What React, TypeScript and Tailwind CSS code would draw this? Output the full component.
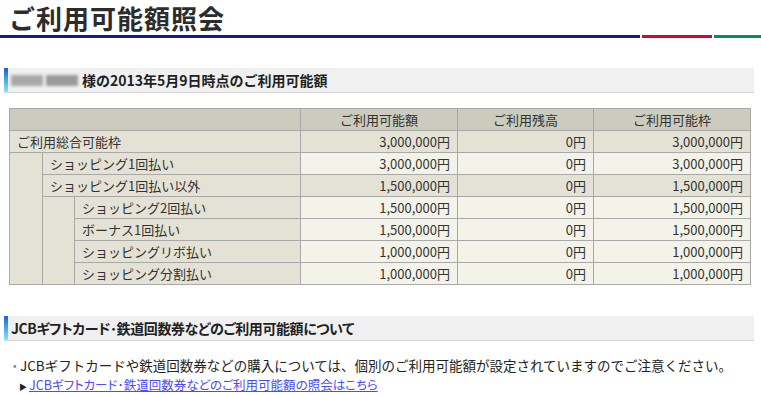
const rows = [
  { label: "ご利用総合可能枠", level: 0, a: "3,000,000円", b: "0円", c: "3,000,000円", dark: true },
  { label: "ショッピング1回払い", level: 1, a: "3,000,000円", b: "0円", c: "3,000,000円", dark: false },
  { label: "ショッピング1回払い以外", level: 1, a: "1,500,000円", b: "0円", c: "1,500,000円", dark: true },
  { label: "ショッピング2回払い", level: 2, a: "1,500,000円", b: "0円", c: "1,500,000円", dark: false },
  { label: "ボーナス1回払い", level: 2, a: "1,500,000円", b: "0円", c: "1,500,000円", dark: false },
  { label: "ショッピングリボ払い", level: 2, a: "1,000,000円", b: "0円", c: "1,000,000円", dark: false },
  { label: "ショッピング分割払い", level: 2, a: "1,000,000円", b: "0円", c: "1,000,000円", dark: false },
];

function SectionHead({ children, palt = false }: { children: React.ReactNode; palt?: boolean }) {
  return (
    <div className="mx-1 flex h-[25px] w-[750px] items-stretch border-b border-[#d6d6d6] bg-[#f0f0f0]">
      <div className="w-1 bg-gradient-to-b from-[#1465c8] to-[#86e6f8]" />
      <div
        className={`flex items-center pl-[3px] text-[14px] font-bold text-[#222] ${
          palt ? "tracking-[-0.4px] [font-feature-settings:'palt']" : ""
        }`}
      >
        {children}
      </div>
    </div>
  );
}

const cell = "h-[22px] border border-[#a9a9a9] px-[7px] py-0 leading-[21px] text-[13px] font-normal text-[#333]";

export default function App() {
  return (
    <div className="h-[395px] w-[761px] overflow-hidden bg-white font-['Noto_Sans_CJK_JP',sans-serif]">
      <h1 className="h-[35px] pl-[9px] text-[26px] leading-[35px] font-bold tracking-[1px] text-[#2c2c2c]">ご利用可能額照会</h1>
      <div className="flex h-[3px] gap-[2px]">
        <div className="w-[640px] bg-[#0f1f80]" />
        <div className="w-[70px] bg-[#e2002b]" />
        <div className="flex-1 bg-[#00915a]" />
      </div>

      <div className="mt-[30px]">
        <SectionHead>
          <span className="mr-[4px] inline-flex gap-[3px]">
            <span className="h-[11px] w-[32px] bg-[#a9a9a9] blur-[1.5px]" />
            <span className="h-[11px] w-[32px] bg-[#9a9a9a] blur-[1.5px]" />
          </span>
          様の2013年5月9日時点のご利用可能額
        </SectionHead>
      </div>

      <table className="ml-[9px] mt-[15px] w-[741px] table-fixed border-collapse">
        <colgroup>
          <col className="w-[33px]" />
          <col className="w-[32px]" />
          <col className="w-[226px]" />
          <col className="w-[157px]" />
          <col className="w-[136px]" />
          <col className="w-[157px]" />
        </colgroup>
        <thead>
          <tr className="bg-[#cbcbbe]">
            <th colSpan={3} className={cell} />
            <th className={`${cell} text-center`}>ご利用可能額</th>
            <th className={`${cell} text-center`}>ご利用残高</th>
            <th className={`${cell} text-center`}>ご利用可能枠</th>
          </tr>
        </thead>
        <tbody>
          {rows.map((r, i) => {
            const val = `${cell} text-right ${r.dark ? "bg-[#e4e2d5]" : "bg-[#f3f3e9]"}`;
            return (
              <tr key={r.label}>
                {i === 1 && <td rowSpan={6} className={`${cell} bg-[#e4e2d5]`} />}
                {i === 3 && <td rowSpan={4} className={`${cell} bg-[#e4e2d5]`} />}
                <td colSpan={3 - r.level} className={`${cell} text-left bg-[#e4e2d5]`}>
                  {r.label}
                </td>
                <td className={val}>{r.a}</td>
                <td className={val}>{r.b}</td>
                <td className={val}>{r.c}</td>
              </tr>
            );
          })}
        </tbody>
      </table>

      <div className="mt-[31px]">
        <SectionHead palt>JCBギフトカード･鉄道回数券などのご利用可能額について</SectionHead>
      </div>

      <div className="mt-[14px] pl-[8px] text-[13.5px] leading-[20px] text-[#222]">
        <p>
          <span className="inline-block w-[12px] text-[#888]">・</span>
          JCBギフトカードや鉄道回数券などの購入については、個別のご利用可能額が設定されていますのでご注意ください。
        </p>
        <p className="pl-[11px] text-[12.5px] [font-feature-settings:'palt']">
          <span className="mr-[2px] inline-block align-middle text-[8px]">▶</span>
          <a href="#" className="text-[#4a4aff] underline">JCBギフトカード･鉄道回数券などのご利用可能額の照会はこちら</a>
        </p>
      </div>
    </div>
  );
}
